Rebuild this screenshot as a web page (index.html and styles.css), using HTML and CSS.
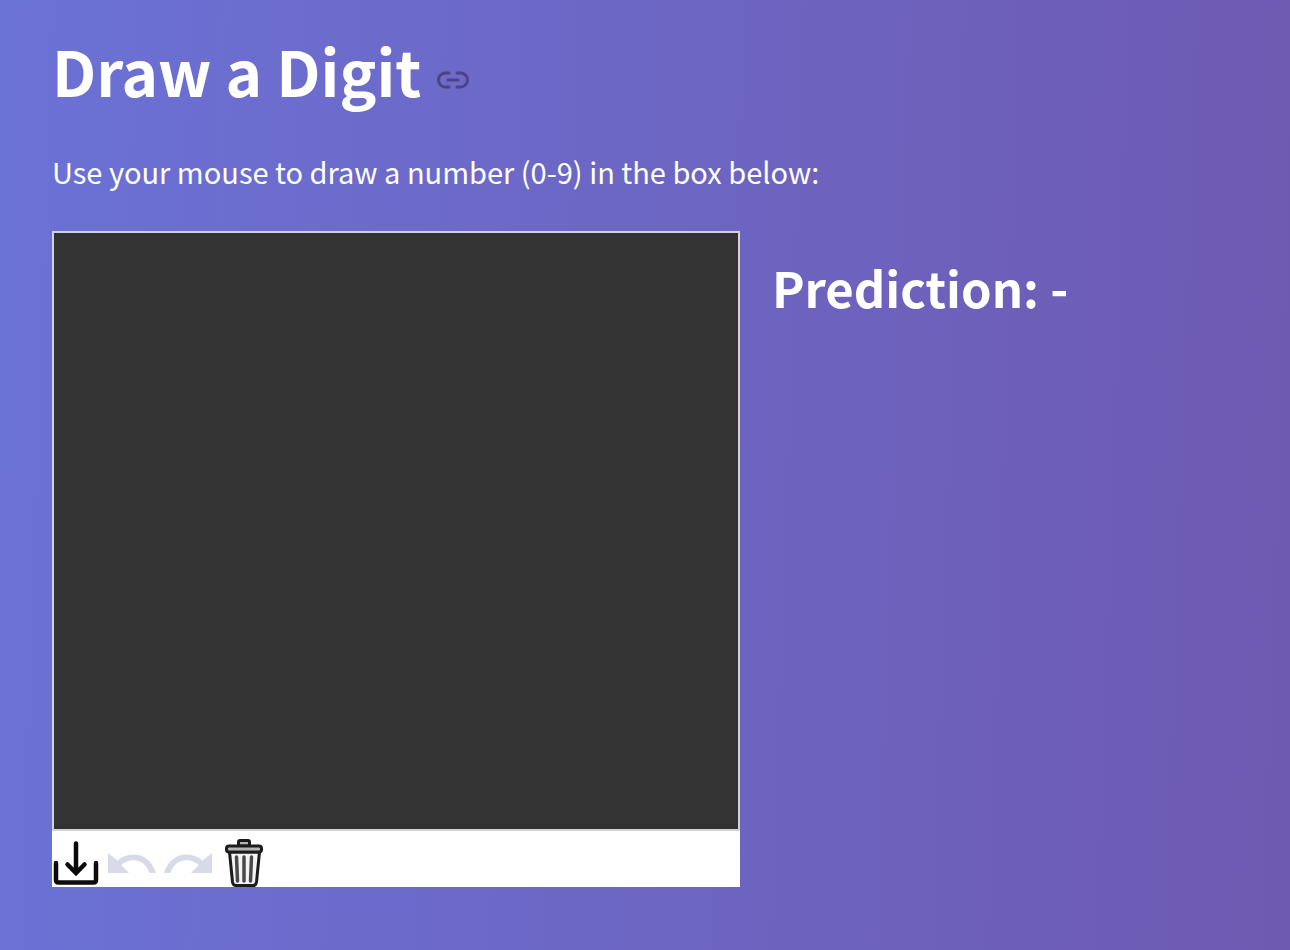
FILE: index.html
```html
<!DOCTYPE html>
<html lang="en">
<head>
<meta charset="utf-8">
<meta name="viewport" content="width=device-width, initial-scale=1">
<title>Draw a Digit</title>
<link rel="stylesheet" href="styles.css">
</head>
<body>
<main class="page">
  <header class="heading">
    <h1 class="title" id="draw-a-digit">Draw a Digit</h1>
    <a class="anchor" href="#draw-a-digit" aria-label="Link to this heading">
      <svg class="anchor-icon" viewBox="0 0 32 18" aria-hidden="true"><path d="M12 2H8.500a7 7 0 0 0 0 14H12M20 2h3.500a7 7 0 0 1 0 14H20M11 9h10"/></svg>
    </a>
  </header>
  <p class="intro">Use your mouse to draw a number (0-9) in the box below:</p>
  <div class="columns">
    <section class="board">
      <canvas class="pad" aria-label="Drawing area"></canvas>
      <div class="toolbar">
        <button class="tool" type="button" aria-label="Download">
          <svg viewBox="0 0 48 48" aria-hidden="true"><path class="ink" d="M4 24v17q0 2.500 2.500 2.500h35q2.500 0 2.500-2.500V24M24 4.500v29M15.500 25.500l8.500 8.500 8.500-8.500"/></svg>
        </button>
        <button class="tool" type="button" aria-label="Undo" disabled>
          <svg viewBox="0 0 48 48" aria-hidden="true"><path class="pale" d="M0 14L9.500 21.500C22 11 42 14 48 34h-6.500C37 20 23 18 13 26l8 8H0z"/></svg>
        </button>
        <button class="tool" type="button" aria-label="Redo" disabled>
          <svg viewBox="0 0 48 48" aria-hidden="true"><path class="pale" d="M48 14L38.500 21.500C26 11 6 14 0 34h6.500C11 20 25 18 35 26l-8 8h21z"/></svg>
        </button>
        <button class="tool" type="button" aria-label="Clear">
          <svg viewBox="0 0 48 48" aria-hidden="true"><g class="trash"><path class="lid" d="M18.500 7V3q0-1.500 1.500-1.500h8q1.500 0 1.500 1.500v4z"/><path class="tin" d="M9.500 13l3 30q.5 3.500 3.500 3.500h17q3 0 3.500-3.500l3-30z"/><rect class="lid" x="6.500" y="7" width="35" height="6" rx="2.500"/><path class="ribs" d="M16.500 18l1 24M24 18v24M31.500 18l-1 24"/></g></svg>
        </button>
      </div>
    </section>
    <h2 class="prediction">Prediction: -</h2>
  </div>
</main>
</body>
</html>
```
FILE: styles.css
```css
* {
  box-sizing: border-box;
}

body {
  margin: 0;
  min-height: 100vh;
  color: #fff;
  font-family: "Source Sans Pro", "Noto Sans CJK JP", sans-serif;
  background: linear-gradient(92deg, #6b72d6, #6e5ab1);
}

.page {
  padding: 28px 52px 63px;
}

.heading {
  display: flex;
  align-items: center;
  gap: 16px;
}

.title,
.prediction {
  margin: 0;
  font-weight: 700;
}

.title {
  font-size: 62px;
  line-height: 84px;
}

.anchor {
  display: flex;
  padding-top: 20px;
}

.anchor-icon {
  width: 32px;
  height: 18px;
  fill: none;
  stroke: #4b4580;
  stroke-width: 3;
  stroke-linecap: round;
}

.intro {
  margin: 34px 0;
  font-size: 29px;
  line-height: 51px;
}

.columns {
  display: grid;
  grid-template-columns: 58% 1fr;
  gap: 32px;
  align-items: start;
}

.board {
  background: #fff;
}

.pad {
  display: block;
  width: 100%;
  height: 600px;
  border: 2px solid #d3d3d3;
  background: #333;
}

.toolbar {
  display: flex;
  gap: 8px;
  padding-top: 8px;
}

.tool {
  width: 48px;
  height: 48px;
  padding: 0;
  border: 0;
  background: none;
}

.tool svg {
  display: block;
  width: 48px;
  height: 48px;
}

.ink {
  fill: none;
  stroke: #0b0b0b;
  stroke-width: 4.5;
  stroke-linecap: round;
}

.trash {
  fill: none;
  stroke: #1c1c1c;
  stroke-width: 3;
  stroke-linecap: round;
  stroke-linejoin: round;
}

.tin {
  fill: #f4f4f4;
}

.lid {
  fill: #b5b5b5;
}

.ribs {
  stroke: #4a4a4a;
  stroke-width: 3.5;
}

.pale {
  fill: #d6dbe7;
}

.prediction {
  padding-top: 22px;
  font-size: 49px;
  line-height: 67px;
}
```
